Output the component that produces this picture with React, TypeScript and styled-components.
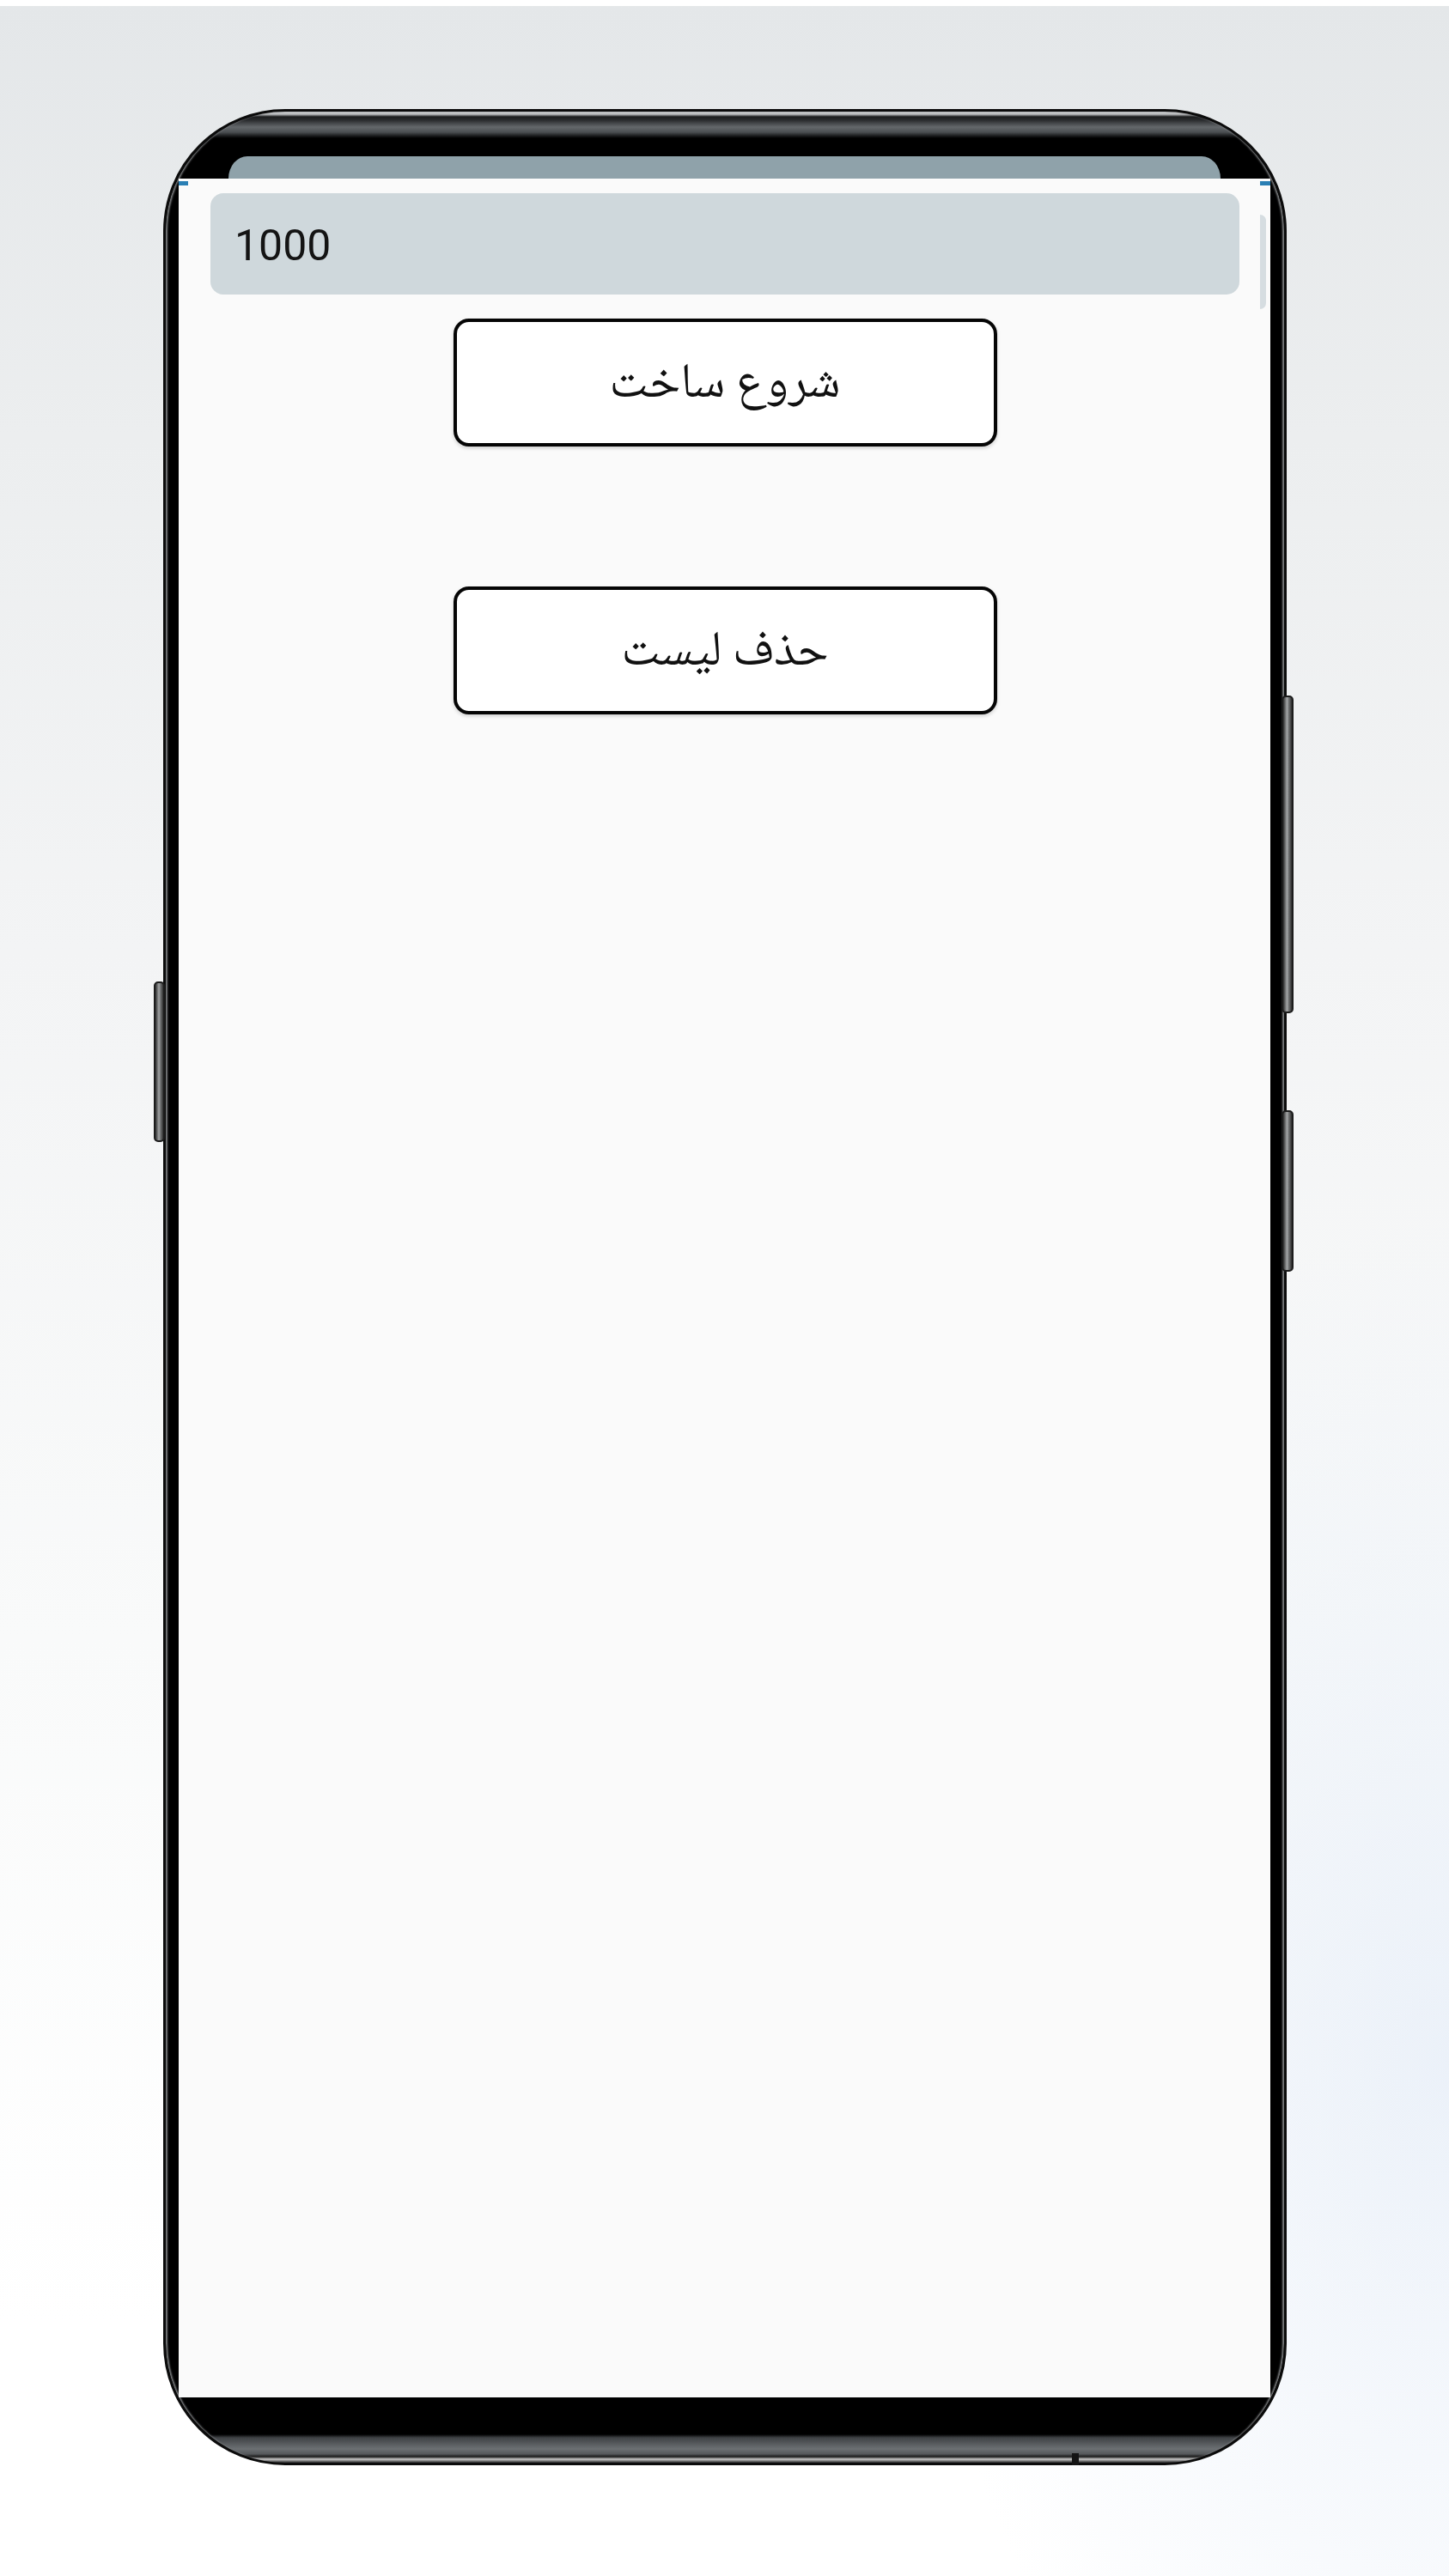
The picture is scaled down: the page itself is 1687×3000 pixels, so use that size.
import React from "react";
import styled, { createGlobalStyle } from "styled-components";

const Global = createGlobalStyle`
  html, body { margin: 0; padding: 0; background: #ffffff; }
  * { box-sizing: border-box; }
`;

const Stage = styled.div`
  width: 1687px;
  height: 3000px;
  border-top: 7px solid #ffffff;
  padding: 120px 0 0 190px;
  background:
    radial-gradient(ellipse 900px 1400px at 100% 80%, rgba(228, 236, 247, 0.7), rgba(228, 236, 247, 0) 70%),
    linear-gradient(180deg, #e4e7e9 0px, #eceeef 500px, #f3f4f5 1100px, #f9fafa 1900px, #ffffff 2700px);
  font-family: Roboto, "Noto Sans", sans-serif;
`;

const Phone = styled.div`
  position: relative;
  width: 1308px;
  height: 2744px;
  border: 3px solid #0b0b0b;
  border-radius: 142px;
  padding: 52px 16px 76px 15px;
  display: flex;
  flex-direction: column;
  background: linear-gradient(
    180deg,
    #c4c6c7 0px,
    #bcbec0 3px,
    #1b1c1d 6px,
    #2a2c2e 10px,
    #64686b 18px,
    #4a4e51 24px,
    #121314 29px,
    #000000 31px,
    #000000 calc(100% - 33px),
    #3f4245 calc(100% - 29px),
    #6c7073 calc(100% - 16px),
    #55585b calc(100% - 10px),
    #1a1a1a calc(100% - 7px),
    #c9c9c9 calc(100% - 4px),
    #2a2a2a 100%
  );
  box-shadow: inset 3px 0 2px -1px #7d7f81, inset -3px 0 2px -1px #7d7f81;
`;

const StatusStrip = styled.div`
  height: 26px;
  margin: 0 58px;
  background: #8fa2aa;
  border-radius: 22px 22px 0 0 / 26px 26px 0 0;
  flex: none;
`;

const Screen = styled.div`
  position: relative;
  flex: 1;
  background: #fafafa;
  display: flex;
  flex-direction: column;
  align-items: center;
  padding: 17px 36px 0 37px;
`;

const EdgeMark = styled.span<{ $side: "left" | "right" }>`
  position: absolute;
  top: 3px;
  ${(p) => (p.$side === "left" ? "left: 0; width: 11px;" : "right: 0; width: 12px;")}
  height: 5px;
  background: #2a7fb4;
`;

const PeekField = styled.span`
  position: absolute;
  right: 5px;
  top: 42px;
  width: 7px;
  height: 110px;
  background: #d6dde1;
  border-radius: 0 8px 8px 0;
`;

const Field = styled.input`
  align-self: stretch;
  height: 118px;
  border: none;
  outline: none;
  border-radius: 15px;
  background: #cfd8dc;
  padding: 4px 0 0 28px;
  font-family: Roboto, "Noto Sans", sans-serif;
  font-size: 50px;
  color: #141414;
`;

const ActionButton = styled.button<{ $gap: number }>`
  width: 633px;
  height: 149px;
  margin-top: ${(p) => p.$gap}px;
  border: 4px solid #050505;
  border-radius: 18px;
  background: #ffffff;
  box-shadow: 0 2px 4px rgba(0, 0, 0, 0.18);
  display: flex;
  align-items: center;
  justify-content: center;
  padding: 8px 0 0;
  font-family: "Noto Naskh Arabic", "DejaVu Sans", serif;
  font-size: 57px;
  color: #111111;
  direction: rtl;
  cursor: pointer;
`;

const SideKey = styled.span<{ $side: "left" | "right"; $top: number; $len: number }>`
  position: absolute;
  top: ${(p) => p.$top}px;
  height: ${(p) => p.$len}px;
  ${(p) => (p.$side === "left" ? "left: -14px; width: 13px;" : "right: -11px; width: 14px;")}
  border: 2px solid #1c1c1c;
  border-radius: 5px;
  background: linear-gradient(90deg, #2e2e2e, #a3a5a6 45%, #7b7d7e 60%, #2e2e2e);
`;

const BottomNotch = styled.span`
  position: absolute;
  left: 1055px;
  bottom: -3px;
  width: 8px;
  height: 14px;
  background: #141414;
`;

export default function App() {
  return (
    <>
      <Global />
      <Stage>
        <Phone>
          <SideKey $side="left" $top={1013} $len={187} />
          <SideKey $side="right" $top={680} $len={370} />
          <SideKey $side="right" $top={1163} $len={188} />
          <StatusStrip />
          <Screen>
            <EdgeMark $side="left" />
            <EdgeMark $side="right" />
            <PeekField />
            <Field readOnly value="1000" />
            <ActionButton $gap={28}>شروع ساخت</ActionButton>
            <ActionButton $gap={163}>حذف لیست</ActionButton>
          </Screen>
          <BottomNotch />
        </Phone>
      </Stage>
    </>
  );
}
